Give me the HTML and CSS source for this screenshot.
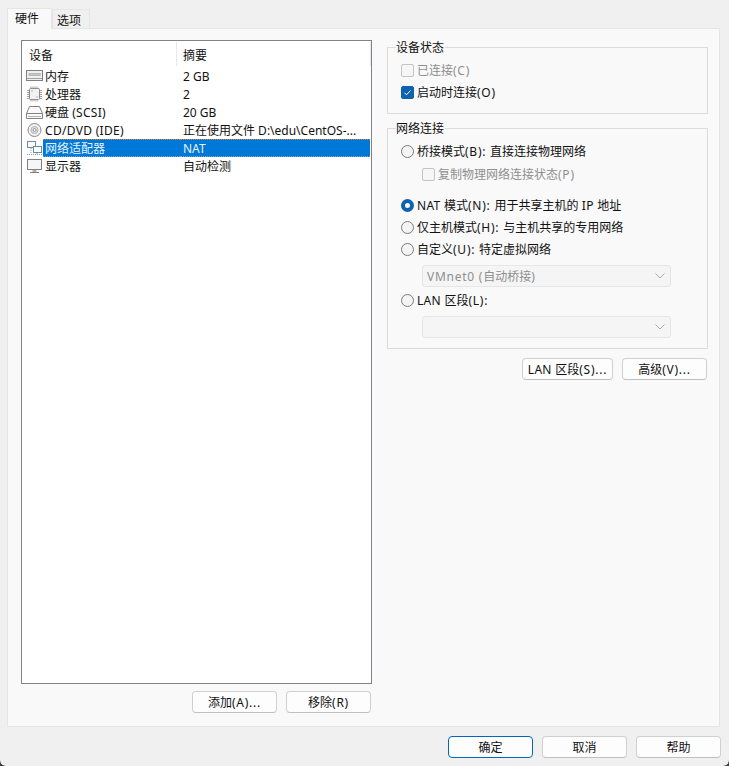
FILE: index.html
```html
<!DOCTYPE html>
<html lang="zh-CN">
<head>
<meta charset="utf-8">
<title>虚拟机设置</title>
<link rel="stylesheet" href="styles.css">
</head>
<body>
<div class="window">
  <div class="tabs">
    <div class="tab active">硬件</div>
    <div class="tab">选项</div>
  </div>
  <div class="panel">
    <div class="left">
      <div class="list">
        <div class="list-head">
          <div class="hcell first">设备</div>
          <div class="hcell">摘要</div>
        </div>
        <div class="row">
          <svg class="ic" viewBox="0 0 17 16"><rect x=".5" y="2.500" width="16" height="10" fill="#f0f0f0" stroke="#808080"/><path d="M2.500 5h12v3h-12z" fill="#a6a6a6"/><path d="M3 5.500v2M5 5.500v2M7 5.500v2M9 5.500v2M11 5.500v2M13 5.500v2" stroke="#e8e8e8"/><path d="M1 10.500h15" stroke="#a0a0a0"/></svg>
          <span class="name">内存</span><span class="sum">2 GB</span>
        </div>
        <div class="row">
          <svg class="ic" viewBox="0 0 17 16"><rect x="3.500" y="2.500" width="10" height="11" rx="1" fill="#f2f2f2" stroke="#8a8a8a"/><path d="M1 4.500h2M1 6.500h2M1 8.500h2M1 10.500h2M1 12.500h2M14 4.500h2M14 6.500h2M14 8.500h2M14 10.500h2M14 12.500h2M5 .5v2M7 .5v2M9 .5v2M11 .5v2M5 13.500v2M7 13.500v2M9 13.500v2M11 13.500v2" stroke="#a0a0a0"/><path d="M5.500 4.500h1v1h-1zM10.500 10.500h1v1h-1z" fill="#777"/></svg>
          <span class="name">处理器</span><span class="sum">2</span>
        </div>
        <div class="row">
          <svg class="ic" viewBox="0 0 17 16"><path d="M3.500 2.500h10l3 7v5H.5v-5z" fill="#fafafa" stroke="#808080"/><path d="M1 9.500h15" stroke="#808080"/><path d="M2 12.500h13" stroke="#b0b0b0"/></svg>
          <span class="name">硬盘 <span class="l">(SCSI)</span></span><span class="sum">20 GB</span>
        </div>
        <div class="row">
          <svg class="ic" viewBox="0 0 17 16"><circle cx="8.500" cy="8" r="6.500" fill="#f2f2f2" stroke="#8a8a8a"/><circle cx="8.500" cy="8" r="3.500" fill="#e2e2e2" stroke="#b4b4b4"/><circle cx="8.500" cy="8" r="1.500" fill="#fff" stroke="#808080" stroke-width=".8"/></svg>
          <span class="name"><span class="l">CD/DVD (IDE)</span></span><span class="sum">正在使用文件 D:\edu\CentOS-...</span>
        </div>
        <div class="row selected">
          <svg class="ic" viewBox="0 0 17 16"><rect x="1.500" y="1.500" width="8" height="6" fill="#fff" stroke="#6d8aa3"/><rect x="7.500" y="6.500" width="8" height="6" fill="#fff" stroke="#6d8aa3"/><path d="M5 8v6M11 13v1.500M1 14.500h15" stroke="#7fa0bb" stroke-dasharray="1 1"/></svg>
          <span class="name hl">网络适配器</span><span class="sum hl">NAT</span>
        </div>
        <div class="row">
          <svg class="ic" viewBox="0 0 17 16"><rect x="1.500" y="1.500" width="14" height="10" fill="#f6f6f6" stroke="#808080"/><path d="M6.500 12h4v2h-4z" fill="#b0b0b0"/><path d="M4 14.500h9" stroke="#808080"/></svg>
          <span class="name">显示器</span><span class="sum">自动检测</span>
        </div>
      </div>
      <div class="btns left-btns">
        <button class="btn">添加<span class="k">(A)...</span></button>
        <button class="btn">移除<span class="k">(R)</span></button>
      </div>
    </div>
    <div class="right">
      <fieldset class="group status">
        <legend>设备状态</legend>
        <div class="opt disabled"><span class="check"></span><span class="txt">已连接<span class="k">(C)</span></span></div>
        <div class="opt"><span class="check on"><svg viewBox="0 0 13 13"><path d="M3.500 6.800l2 2 4-4.300" fill="none" stroke="#fff" stroke-width="1"/></svg></span><span class="txt">启动时连接<span class="k">(O)</span></span></div>
      </fieldset>
      <fieldset class="group network">
        <legend>网络连接</legend>
        <div class="opt"><span class="radio"></span><span class="txt">桥接模式<span class="k">(B): </span>直接连接物理网络</span></div>
        <div class="opt sub disabled"><span class="check"></span><span class="txt">复制物理网络连接状态<span class="k">(P)</span></span></div>
        <div class="opt gap-top"><span class="radio on"></span><span class="txt"><span class="l">NAT </span>模式<span class="k">(N): </span>用于共享主机的<span class="l"> IP </span>地址</span></div>
        <div class="opt"><span class="radio"></span><span class="txt">仅主机模式<span class="k">(H): </span>与主机共享的专用网络</span></div>
        <div class="opt"><span class="radio"></span><span class="txt">自定义<span class="k">(U): </span>特定虚拟网络</span></div>
        <div class="combo"><span class="txt"><span class="k">VMnet0 (</span>自动桥接<span class="k">)</span></span><svg viewBox="0 0 10 6"><path d="M.5 .5L5 5 9.500 .5" fill="none" stroke="#a8a8a8"/></svg></div>
        <div class="opt"><span class="radio"></span><span class="txt"><span class="l">LAN </span>区段<span class="k">(L):</span></span></div>
        <div class="combo"><svg viewBox="0 0 10 6"><path d="M.5 .5L5 5 9.500 .5" fill="none" stroke="#a8a8a8"/></svg></div>
      </fieldset>
      <div class="btns net-btns">
        <button class="btn lan"><span class="l">LAN </span>区段<span class="k">(S)...</span></button>
        <button class="btn">高级<span class="k">(V)...</span></button>
      </div>
    </div>
  </div>
  <div class="btns footer">
    <button class="btn primary">确定</button>
    <button class="btn">取消</button>
    <button class="btn">帮助</button>
  </div>
</div>
</body>
</html>
```
FILE: styles.css
```css
* { box-sizing: border-box; }
html, body { margin: 0; padding: 0; height: 100%; background: #3a3a3a; overflow: hidden; }
body { font: 12px/16px "Noto Sans", "Noto Sans CJK SC", sans-serif; color: #111; }
.k { letter-spacing: .75px; }
.l { letter-spacing: .3px; }
.txt { padding-top: 2px; }
.window {
  height: 766px; background: #f0f0f0; padding: 8px 8px 0 7px;
  border-radius: 0 0 6px 6px; display: flex; flex-direction: column;
}
.tabs { display: flex; height: 20px; align-items: flex-end; }
.tab {
  width: 38px; height: 19px; padding-right: 4px; background: #f0f0f0;
  border: 1px solid #e5e5e5; border-bottom: 0; text-align: center; line-height: 21px;
}
.tab.active {
  width: 45px; height: 21px; padding-right: 5px; background: #f9f9f9; line-height: 20px;
  position: relative; margin-bottom: -1px;
}
.panel {
  width: 713px; height: 699px; background: #f9f9f9; border: 1px solid #e5e5e5;
  padding: 11px 11px 11px 13px; display: flex; gap: 15px;
}
.left { width: 351px; flex: none; display: flex; flex-direction: column; }
.list { height: 644px; background: #fff; border: 1px solid #82828c; }
.list-head { display: flex; height: 26px; padding-top: 1px; }
.hcell { flex: 1; height: 24px; line-height: 27px; padding-left: 6px; border-right: 1px solid #e8e8e8; }
.hcell.first { flex: 0 0 155px; padding-left: 7px; }
.row { display: flex; align-items: center; height: 18px; padding-left: 4px; }
.ic { width: 17px; height: 16px; flex: none; }
.name, .sum { height: 18px; padding-top: 2px; line-height: 16px; white-space: nowrap; }
.name { width: 137px; flex: none; padding-left: 2px; }
.sum { flex: 1; padding-left: 3px; }
.hl { background: #0078d7; color: #e8f2fb; border-top: 1px dotted #d8801f; border-bottom: 1px dotted #7aa9d0; padding-top: 1px; }
.sum.hl { margin-right: 1px; }
.btns { display: flex; justify-content: flex-end; gap: 9px; }
.left-btns { margin: 7px 1px 0 0; }
.btn {
  width: 85px; height: 22px; padding: 1px 0 0; font: inherit; color: #111; background: #fdfdfd;
  border: 1px solid #d0d0d0; border-bottom-color: #c0c0c0; border-radius: 4px; line-height: 19px;
}
.btn.lan { width: 91px; }
.btn.primary { border: 1px solid #0067c0; }
.right { width: 321px; flex: none; }
.group { margin: 0; padding: 0 13px; border: 1px solid #dcdcdc; min-width: 0; }
.group legend { padding: 1px 1px 0 0; margin-left: -5px; line-height: 14px; }
.status { height: 74px; padding-top: 4px; }
.network { height: 228px; margin-top: 7px; padding-top: 4px; }
.opt { display: flex; align-items: center; height: 22px; white-space: nowrap; }
.opt.disabled { color: #8e8e8e; }
.opt.sub { margin-left: 21px; height: 24px; }
.opt.gap-top { margin-top: 8px; }
.check {
  width: 13px; height: 13px; flex: none; margin-right: 3px; border: 1px solid #c4c4c4;
  border-radius: 2px; background: #f6f6f6; display: flex;
}
.check.on { background: #0f62b0; border-color: #0f62b0; }
.check.on svg { width: 13px; height: 13px; margin: -1px; flex: none; }
.radio {
  width: 13px; height: 13px; flex: none; margin-right: 3px; border: 1px solid #7a7a7a;
  border-radius: 50%; background: #f4f4f4;
}
.radio.on { background: #fff; border: 4px solid #0f62b0; }
.combo {
  width: 249px; height: 22px; margin: 5px 0 2px 21px; padding: 0 4px; display: flex; align-items: center;
  background: #f5f5f5; border: 1px solid #e6e6e6; border-radius: 3px; color: #8e8e8e;
}
.combo svg { width: 10px; height: 6px; margin-left: auto; margin-right: 1px; }
.net-btns { margin: 9px 1px 0 0; }
.footer { margin-top: 9px; }
```
